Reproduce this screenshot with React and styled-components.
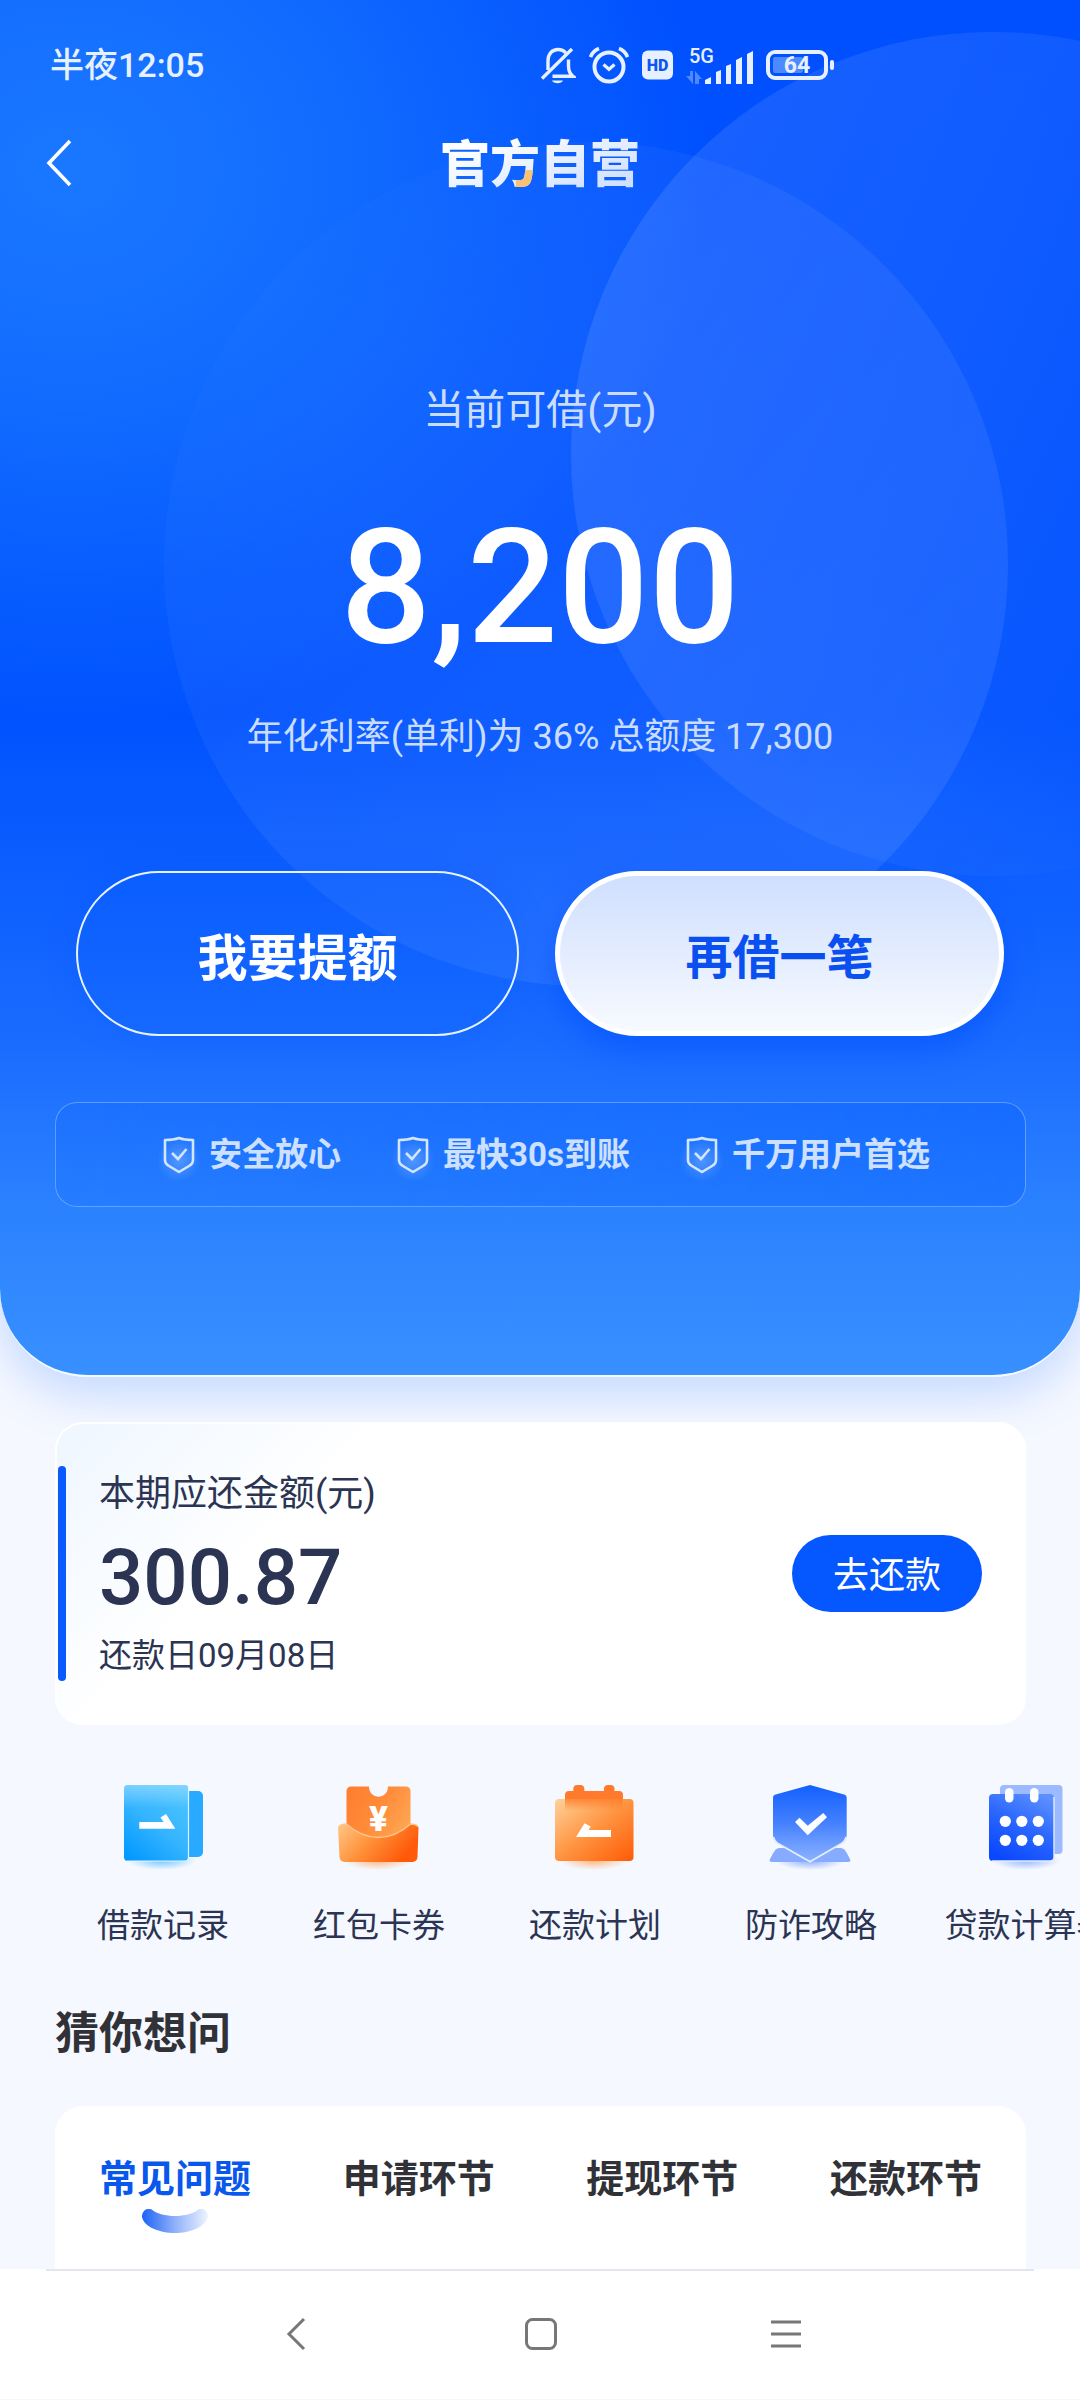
import React, { useState } from 'react';
import styled, { createGlobalStyle, css } from 'styled-components';

const GlobalStyle = createGlobalStyle`
  * { box-sizing: border-box; }
  body {
    margin: 0;
    background: #f5f8ff;
    font-family: Roboto, 'Noto Sans CJK SC', sans-serif;
    overflow-x: hidden;
  }
  button { font-family: inherit; cursor: pointer; }
  svg { display: block; flex: none; }
`;

const Page = styled.div`
  display: flex;
  flex-direction: column;
  min-height: 100vh;
`;

/* ---------- hero ---------- */

const Hero = styled.header`
  position: relative;
  overflow: hidden;
  padding-bottom: 168px;
  border-bottom: 2px solid #f2fcff;
  border-radius: 0 0 88px 88px;
  background:
    radial-gradient(ellipse 640px 560px at 70px 170px, #1a78ff 0%, rgba(22, 114, 255, 0.85) 38%, rgba(0, 82, 255, 0) 100%),
    linear-gradient(180deg, #0050ff 0%, #0052ff 52%, #1a6cff 76%, #2b82ff 88%, #3890ff 100%);
`;

const HeroShadow = styled.div`
  border-radius: 0 0 88px 88px;
  box-shadow: 0 16px 48px rgba(60, 130, 255, 0.28);
`;

const Circle = styled.div`
  position: absolute;
  width: 844px;
  height: 844px;
  border-radius: 50%;
  ${(p) =>
    p.$back
      ? css`
          top: 142px;
          left: 164px;
          background: linear-gradient(135deg, rgba(255, 255, 255, 0) 8%, rgba(255, 255, 255, 0.05) 40%, rgba(255, 255, 255, 0.09) 100%);
        `
      : css`
          top: 32px;
          left: 571px;
          background: linear-gradient(115deg, rgba(255, 255, 255, 0.1) 10%, rgba(255, 255, 255, 0.06) 45%, rgba(255, 255, 255, 0.01) 75%);
        `}
`;

const HeroBody = styled.div`
  position: relative;
  display: flex;
  flex-direction: column;
`;

const StatusBar = styled.div`
  display: grid;
  grid-template-columns: 1fr 1fr;
  align-items: center;
  height: 130px;
  color: #e6f0ff;
`;

const Clock = styled.time`
  padding-left: 50px;
  font-size: 34px;
  font-weight: 500;
  line-height: 44px;
`;

const StatusIcons = styled.div`
  display: flex;
  align-items: center;
  gap: 13px;
`;

const TitleBar = styled.div`
  display: grid;
  grid-template-columns: 1fr auto 1fr;
  align-items: center;
  height: 62px;
`;

const BackButton = styled.button`
  justify-self: start;
  margin-left: 34px;
  padding: 0 12px;
  border: 0;
  background: none;
`;

const Brand = styled.h1`
  margin: 0 0 6px;
  font-family: 'Noto Sans CJK SC', sans-serif;
  font-size: 50px;
  font-weight: 900;
  line-height: 60px;
  color: transparent;
  background:
    linear-gradient(#f8c274, #f8c274) 76px 40px / 24px 20px no-repeat,
    linear-gradient(160deg, #ffffff 20%, #cfe0ff 90%);
  background-clip: text;
  -webkit-background-clip: text;
`;

const Caption = styled.p`
  margin: 188px 0 0;
  text-align: center;
  font-size: 41px;
  line-height: 60px;
  color: #cbddff;
`;

const Amount = styled.p`
  margin: 58px 0 0;
  text-align: center;
  font-size: 160px;
  font-weight: 500;
  line-height: 180px;
  color: #fff;
`;

const Rate = styled.p`
  margin: 34px 0 0;
  text-align: center;
  font-size: 36px;
  line-height: 50px;
  color: #cbddff;
`;

const Actions = styled.div`
  display: flex;
  gap: 36px;
  margin-top: 109px;
  padding: 0 76px;
`;

const ActionButton = styled.button`
  flex: 1;
  height: 165px;
  border-radius: 83px;
  font-weight: 700;
  ${(p) =>
    p.$primary
      ? css`
          border: 5px solid #fff;
          background: linear-gradient(180deg, #cfdfff 0%, #f7faff 100%);
          box-shadow: 0 14px 30px rgba(0, 80, 255, 0.6);
          color: #0a4ff0;
          font-size: 47px;
        `
      : css`
          border: 2px solid #e6f4ff;
          background: rgba(0, 90, 255, 0.12);
          box-shadow: 0 0 30px rgba(0, 80, 255, 0.25);
          color: #fff;
          font-size: 50px;
        `}
`;

const Promises = styled.ul`
  display: flex;
  justify-content: center;
  align-items: center;
  gap: 50px;
  height: 105px;
  margin: 66px 54px 0 55px;
  padding: 0 0 0 6px;
  list-style: none;
  border: 1px solid rgba(150, 195, 255, 0.55);
  border-radius: 22px;
  background: linear-gradient(90deg, rgba(0, 90, 255, 0.1), rgba(0, 90, 255, 0.3));
`;

const PromiseItem = styled.li`
  display: flex;
  align-items: center;
  gap: 8px;
  font-size: 33px;
  font-weight: 700;
  line-height: 44px;
  color: #cde0ff;
`;

/* ---------- content ---------- */

const BillCard = styled.section`
  display: flex;
  align-items: center;
  min-height: 303px;
  margin: 45px 54px 0 55px;
  padding: 44px 44px 44px 3px;
  border-radius: 28px;
  background: linear-gradient(135deg, #eef6ff 0%, #ffffff 26%);
  box-shadow: inset 0 0 0 2px #fff;
`;

const BillMarker = styled.span`
  align-self: stretch;
  width: 8px;
  border-radius: 4px;
  background: #0a5bff;
`;

const BillInfo = styled.div`
  flex: 1;
  padding: 0 0 4px 33px;
  color: #2b3452;
`;

const BillTitle = styled.h2`
  margin: 0;
  font-size: 36px;
  font-weight: 400;
  line-height: 52px;
`;

const BillAmount = styled.p`
  margin: 0;
  font-size: 78px;
  font-weight: 500;
  line-height: 116px;
`;

const BillDate = styled.p`
  margin: 0;
  font-size: 33px;
  line-height: 40px;
`;

const PayButton = styled.button`
  width: 190px;
  height: 77px;
  padding: 0 0 4px;
  border: 0;
  border-radius: 39px;
  background: #0557ff;
  color: #fff;
  font-size: 36px;
`;

const Shortcuts = styled.nav`
  display: flex;
  margin-top: 52px;
  padding-left: 55px;
  overflow: hidden;
`;

const Shortcut = styled.a`
  display: flex;
  flex: 0 0 216px;
  flex-direction: column;
  align-items: center;
  gap: 31px;
  font-size: 33px;
  line-height: 44px;
  white-space: nowrap;
  color: #2b3452;
  text-decoration: none;
`;

const SectionTitle = styled.h2`
  margin: 56px 55px 0;
  font-size: 44px;
  font-weight: 700;
  line-height: 60px;
  color: #303237;
`;

const FaqCard = styled.section`
  margin: 42px 54px 0 55px;
  padding: 47px 44px 34px;
  border-radius: 28px 28px 0 0;
  background: #fff;
`;

const Tabs = styled.div`
  display: flex;
  justify-content: space-between;
  align-items: flex-start;
`;

const Tab = styled.button`
  display: flex;
  flex-direction: column;
  align-items: center;
  gap: 4px;
  min-height: 82px;
  padding: 0;
  border: 0;
  background: none;
  font-size: 38px;
  font-weight: 700;
  line-height: 52px;
  color: ${(p) => (p.$active ? '#0a57ee' : '#303237')};
`;

const SystemNav = styled.nav`
  display: flex;
  align-items: center;
  height: 130px;
  padding: 0 172px 0 174px;
  background: linear-gradient(90deg, transparent 46px, #e2e6ee 46px, #e2e6ee calc(100% - 46px), transparent calc(100% - 46px)) top / 100% 2px no-repeat, #fff;
`;

const SystemButton = styled.button`
  display: flex;
  flex: 1;
  justify-content: center;
  padding: 16px 0;
  border: 0;
  background: none;
`;

/* ---------- drawings ---------- */

const BellOff = () => (
  <svg width="36" height="40" viewBox="0 0 36 40" fill="none" stroke="#e6f0ff" strokeWidth="3.4">
    <path d="M8 25V16c0-7 4-11.500 10-11.500 3.500 0 6 1.300 7.600 3.500" />
    <path d="M28.500 14.500V21c0 5 1.500 8 4.500 10.300H12.500" />
    <path d="M2 33.500 32 4" />
    <path d="M12 35.500h11c-1.500 3.500-9.500 3.500-11 0z" fill="#e6f0ff" stroke="none" />
  </svg>
);

const Alarm = () => (
  <svg width="40" height="40" viewBox="0 0 40 40" fill="none" stroke="#e6f0ff" strokeWidth="4">
    <circle cx="20" cy="22" r="14.500" />
    <path d="M1.500 12C3 8 6 5 10 3.500M38.500 12C37 8 34 5 30 3.500" strokeWidth="3.600" />
    <path d="m14.500 19.500 5.500 4.800 5.500-4.800" strokeWidth="3.200" />
  </svg>
);

const HdBadge = () => (
  <svg width="31" height="30" viewBox="0 0 31 30">
    <rect width="31" height="29" y="0.500" rx="6" fill="#e6f0ff" />
    <text x="15.500" y="20.500" textAnchor="middle" fontFamily="Roboto" fontWeight="900" fontSize="16" fill="#0c56f5">HD</text>
  </svg>
);

const Signal = () => (
  <svg width="67" height="40" viewBox="0 0 67 40" fill="#e6f0ff">
    <text x="3" y="18" fontFamily="Roboto" fontWeight="500" fontSize="20">5G</text>
    <path d="M0 31h4V26h3v13zM9 39V26l7 8h-3v5z" opacity="0.350" />
    <path d="M19 39v-4l6-3v7zM30 39v-12l5-2v14zM40 39V21l5-2v20zM50 39V15l6-3v27zM61 39V9l6-3v33z" />
  </svg>
);

const Battery = () => (
  <svg width="68" height="30" viewBox="0 0 68 30">
    <rect x="2" y="2" width="58" height="26" rx="7" fill="none" stroke="#e6f0ff" strokeWidth="4" />
    <rect x="7" y="7" width="30" height="16" rx="2" fill="#4d8aff" />
    <rect x="64" y="10" width="4" height="10" rx="2" fill="#e6f0ff" />
    <text x="31" y="23" textAnchor="middle" fontFamily="Roboto" fontWeight="700" fontSize="23" fill="#e6f0ff">64</text>
  </svg>
);

const ShieldOutline = () => (
  <svg width="44" height="54" viewBox="0 0 44 54" fill="none">
    <defs>
      <radialGradient id="shieldGlow">
        <stop offset="0" stopColor="#9cc8ff" stopOpacity="0.400" />
        <stop offset="1" stopColor="#9cc8ff" stopOpacity="0" />
      </radialGradient>
    </defs>
    <ellipse cx="22" cy="32" rx="22" ry="22" fill="url(#shieldGlow)" />
    <path d="M22 10c4 1.500 9 2 14 2v20c0 3-1.500 4.500-4 6L22 44l-10-6c-2.500-1.500-4-3-4-6V12c5 0 10-.500 14-2z" stroke="#d3e5ff" strokeWidth="2.600" strokeLinejoin="round" />
    <path d="m15 25 6 6 8.500-10" stroke="#d3e5ff" strokeWidth="2.600" />
  </svg>
);

const Gradient = ({ id, from, to, mid, x1 = 0, y1 = 0, x2 = 0, y2 = 1 }) => (
  <linearGradient id={id} x1={x1} y1={y1} x2={x2} y2={y2}>
    <stop offset="0" stopColor={from} />
    {mid && <stop offset="0.500" stopColor={mid} />}
    <stop offset="1" stopColor={to} />
  </linearGradient>
);

const IconFrame = ({ id, glow, children }) => (
  <svg width="96" height="96" viewBox="0 0 96 96">
    <defs>
      <radialGradient id={`${id}Glow`}>
        <stop offset="0" stopColor={glow} stopOpacity="0.900" />
        <stop offset="1" stopColor={glow} stopOpacity="0" />
      </radialGradient>
    </defs>
    <ellipse cx="47" cy="84" rx="34" ry="9" fill={`url(#${id}Glow)`} />
    {children}
  </svg>
);

const LedgerIcon = () => (
  <IconFrame id="ledger" glow="#6cc4ff">
    <defs>
      <Gradient id="ledgerFront" from="#4cc4ff" mid="#35b4ff" to="#0098ff" x1={0.8} y1={0} x2={0.1} y2={1} />
      <Gradient id="ledgerShine" from="#a5e0ff" to="#a5e0ff00" y2={0.3} />
    </defs>
    <path d="M73 14h10a5 5 0 0 1 5 5v56a5 5 0 0 1-5 5H73z" fill="#27aaff" />
    <rect x="9" y="8" width="64.500" height="76" rx="4" fill="url(#ledgerFront)" />
    <rect x="9" y="8" width="64.500" height="76" rx="4" fill="url(#ledgerShine)" opacity="0.600" />
    <path d="M73.500 10v70c0 2-1 4-3 4H12" fill="none" stroke="#dff4ff" strokeWidth="1.200" />
    <path d="M24.300 45H48.700L45.500 40.500 51 37 60.300 51.700H24.300z" fill="#fff" />
  </IconFrame>
);

const CouponIcon = () => (
  <IconFrame id="coupon" glow="#ffb27a">
    <defs>
      <Gradient id="couponTicket" from="#ff7d2e" mid="#ff8a38" to="#ffa552" x2={1} y2={0.6} />
      <Gradient id="couponPocket" from="#ffc787" mid="#ff9038" to="#ff5a0a" x2={1} y2={0.4} />
    </defs>
    <path d="M20 9.500h18c0 13.500 19 13.500 19 0h18a4.500 4.500 0 0 1 4.500 4.500v56h-64V14A4.500 4.500 0 0 1 20 9.500z" fill="url(#couponTicket)" />
    <path d="M7 51c0-2.500 4-4 8.500-4 20 18 44 18 64 0 4.500 0 8 1.500 8 4L86.500 80a5 5 0 0 1-5 5h-68a5 5 0 0 1-5-5z" fill="url(#couponPocket)" />
    <path d="M8 49.500c2-2 4-2.500 7.500-2.500 20 18 44 18 64 0 3 0 5.500.500 7.500 2.500" fill="none" stroke="#ffc48c" strokeWidth="1.400" />
    <text x="47.500" y="54" textAnchor="middle" fontFamily="Roboto" fontWeight="900" fontSize="35" fill="#fff">¥</text>
  </IconFrame>
);

const PlanIcon = () => (
  <IconFrame id="plan" glow="#ffb27a">
    <defs>
      <Gradient id="planBody" from="#ffd29a" mid="#ff9340" to="#ff5a05" x2={1} y2={1} />
      <Gradient id="planShade" from="#ff7a26" to="#ff7a2600" />
    </defs>
    <path d="M18 24V18a4 4 0 0 1 4-4h4.300v-2a4 4 0 0 1 4-4h3a4 4 0 0 1 4 4v2H57v-2a4 4 0 0 1 4-4h2.500a4 4 0 0 1 4 4v2H72a4 4 0 0 1 4 4v6z" fill="#ff7a2c" />
    <rect x="8" y="22" width="78.500" height="62" rx="4" fill="url(#planBody)" />
    <rect x="18" y="22" width="58" height="12" fill="url(#planShade)" opacity="0.800" />
    <path d="M29 60 37.500 46.300 43.700 49.500 41.700 53H64v7z" fill="#fff" />
  </IconFrame>
);

const GuardIcon = () => (
  <IconFrame id="guard" glow="#7fa8ff">
    <defs>
      <Gradient id="guardShield" from="#1260ff" mid="#4581ff" to="#8db3ff" />
    </defs>
    <path d="M17 71h60c3 0 5 2 6.500 4.500L87 82c1 2 0 3-2 3H9c-2 0-3-1-2-3l3.500-6.500C12 73 14 71 17 71z" fill="#86abff" />
    <path d="M47 8 81 17.500c2 .500 2.700 1.500 2.700 3.500V57c0 5-1.500 7.500-5 9.500L47 84.700 15 66.500c-3.500-2-5-4.500-5-9.500V21c0-2 .700-3 2.700-3.500z" fill="url(#guardShield)" />
    <path d="M83 60c-.500 3.500-2 5-4.500 6.500L47 84.700 15 66.500c-2.500-1.500-4-3-4.500-6.500" fill="none" stroke="#e3edff" strokeWidth="1.800" />
    <path d="m32 45 4.500-4.300 8.200 8L60.300 36l3.700 4.300-19.300 18z" fill="#fff" />
  </IconFrame>
);

const CalculatorIcon = () => (
  <IconFrame id="calc" glow="#8fb3ff">
    <defs>
      <Gradient id="calcFront" from="#5c90ff" mid="#2a66ff" to="#0a48ff" x1={0.8} x2={0.3} />
    </defs>
    <rect x="21" y="8" width="62.500" height="69" rx="4" fill="#9bbaff" />
    <rect x="10" y="17" width="65" height="67" rx="4" fill="url(#calcFront)" />
    <path d="M75 20v60c0 2.500-1.500 4-4 4H13" fill="none" stroke="#e3edff" strokeWidth="1.400" />
    <g fill="#fff">
      <rect x="26" y="11" width="8.500" height="14.500" rx="4.200" />
      <rect x="51" y="11" width="8.500" height="14.500" rx="4.200" />
      {[44.3, 63.3].map((y) => [26.3, 42.8, 59.3].map((x) => <circle key={`${x}-${y}`} cx={x} cy={y} r="5.600" />))}
    </g>
  </IconFrame>
);

const Smile = () => (
  <svg width="66" height="24" viewBox="0 0 66 24">
    <defs>
      <Gradient id="smile" from="#1d62f5" mid="#8fb1fb" to="#eef3ff" x2={1} y2={0} />
    </defs>
    <path d="M10 .700C20 9 46 9 56 .700c4-3 10 1 10 6C64 18 48 24 33 24S2 18 0 8C0 1 6-2 10 .700z" fill="url(#smile)" />
  </svg>
);

const promises = ['安全放心', '最快30s到账', '千万用户首选'];

const shortcuts = [
  { label: '借款记录', Icon: LedgerIcon },
  { label: '红包卡券', Icon: CouponIcon },
  { label: '还款计划', Icon: PlanIcon },
  { label: '防诈攻略', Icon: GuardIcon },
  { label: '贷款计算器', Icon: CalculatorIcon },
];

const tabs = ['常见问题', '申请环节', '提现环节', '还款环节'];

export default function App() {
  const [active, setActive] = useState(tabs[0]);

  return (
    <Page>
      <GlobalStyle />
      <HeroShadow>
        <Hero>
          <Circle $back />
          <Circle />
          <HeroBody>
            <StatusBar>
              <Clock>半夜12:05</Clock>
              <StatusIcons>
                <BellOff />
                <Alarm />
                <HdBadge />
                <Signal />
                <Battery />
              </StatusIcons>
            </StatusBar>
            <TitleBar>
              <BackButton aria-label="返回">
                <svg width="26" height="48" viewBox="0 0 26 48" fill="none" stroke="#fff" strokeWidth="3.600">
                  <path d="M24 2 3 24l21 22" />
                </svg>
              </BackButton>
              <Brand>官方自营</Brand>
            </TitleBar>
            <Caption>当前可借(元)</Caption>
            <Amount>8,200</Amount>
            <Rate>年化利率(单利)为 36% 总额度 17,300</Rate>
            <Actions>
              <ActionButton>我要提额</ActionButton>
              <ActionButton $primary>再借一笔</ActionButton>
            </Actions>
            <Promises>
              {promises.map((text) => (
                <PromiseItem key={text}>
                  <ShieldOutline />
                  {text}
                </PromiseItem>
              ))}
            </Promises>
          </HeroBody>
        </Hero>
      </HeroShadow>

      <BillCard>
        <BillMarker />
        <BillInfo>
          <BillTitle>本期应还金额(元)</BillTitle>
          <BillAmount>300.87</BillAmount>
          <BillDate>还款日09月08日</BillDate>
        </BillInfo>
        <PayButton>去还款</PayButton>
      </BillCard>

      <Shortcuts>
        {shortcuts.map(({ label, Icon }) => (
          <Shortcut key={label} href="#">
            <Icon />
            {label}
          </Shortcut>
        ))}
      </Shortcuts>

      <SectionTitle>猜你想问</SectionTitle>
      <FaqCard>
        <Tabs role="tablist">
          {tabs.map((name) => (
            <Tab key={name} role="tab" aria-selected={name === active} $active={name === active} onClick={() => setActive(name)}>
              {name}
              {name === active && <Smile />}
            </Tab>
          ))}
        </Tabs>
      </FaqCard>

      <SystemNav>
        <SystemButton aria-label="后退">
          <svg width="20" height="34" viewBox="0 0 20 34" fill="none" stroke="#777" strokeWidth="3">
            <path d="M18 2 3 17l15 15" />
          </svg>
        </SystemButton>
        <SystemButton aria-label="主屏幕">
          <svg width="34" height="34" viewBox="0 0 34 34" fill="none" stroke="#777" strokeWidth="3">
            <rect x="2.500" y="2.500" width="29" height="29" rx="6" />
          </svg>
        </SystemButton>
        <SystemButton aria-label="最近任务">
          <svg width="32" height="30" viewBox="0 0 32 30" stroke="#777" strokeWidth="3">
            <path d="M1 3h30M1 15h30M1 27h30" />
          </svg>
        </SystemButton>
      </SystemNav>
    </Page>
  );
}
